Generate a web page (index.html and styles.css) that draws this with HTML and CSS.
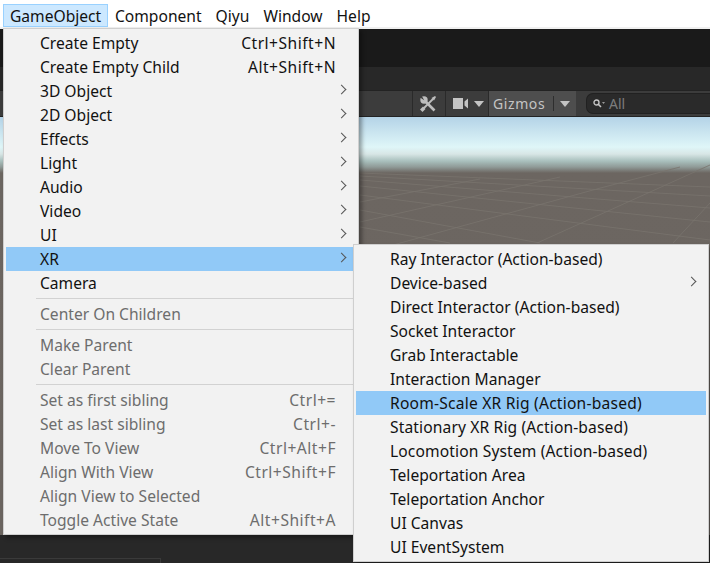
FILE: index.html
```html
<!DOCTYPE html>
<html>
<head>
  <title>GameObject menu</title>
  <link rel="stylesheet" href="styles.css">
</head>
<body>

<div class="menubar">
  <span class="top-item top-item-hover">GameObject</span>
  <span class="top-item">Component</span>
  <span class="top-item">Qiyu</span>
  <span class="top-item">Window</span>
  <span class="top-item">Help</span>
</div>

<div class="editor">
  <div class="band-title"></div>
  <div class="band-tabs"></div>
  <div class="band-tools">
    <div class="tool tool-wrench">
      <svg width="16" height="16" viewBox="0 0 16 16">
        <path d="M5 5 L14.500 14.500" stroke="#bdbdbd" stroke-width="2.600"/>
        <circle cx="4" cy="4" r="3.700" fill="#bdbdbd"/>
        <path d="M4.200 4.200 L0 1.500 L1.500 -0.500 Z" fill="#3c3c3c"/>
        <path d="M13 3 L3 13" stroke="#bdbdbd" stroke-width="1.800"/>
        <path d="M3 10.500 L5.500 13 L2.500 16 L0 13.500 Z" fill="#bdbdbd"/>
        <path d="M11.500 2 L15 0 L16 1 L14 4.500 Z" fill="#bdbdbd"/>
      </svg>
    </div>
    <div class="tool tool-camera">
      <svg width="16" height="11" viewBox="0 0 16 11"><rect width="10" height="11" fill="#c4c4c4"/><path d="M11.500 3.500 L15 0.500 L15 10.500 L11.500 7.500 Z" fill="#c4c4c4"/></svg>
      <span class="caret"></span>
    </div>
    <div class="tool tool-gizmos">
      <span class="gizmos-label">Gizmos</span>
      <span class="gizmos-sep"></span>
      <span class="caret"></span>
    </div>
    <div class="search">
      <svg width="12" height="10" viewBox="0 0 12 10"><circle cx="3.500" cy="3.500" r="2.500" fill="none" stroke="#c4c4c4" stroke-width="1.400"/><path d="M5.500 5.500 L8 8" stroke="#c4c4c4" stroke-width="1.600"/><path d="M9 3 L12 3 L10.500 5 Z" fill="#999"/></svg>
      <span class="search-text">All</span>
    </div>
  </div>
  <div class="scene">
    <svg class="grid" width="710" height="130" viewBox="0 0 710 130">
      <path d="M360 110 L450 126 M360 93 L540 126 M360 78 L710 123 M360 69 L710 105 M360 63 L710 91 M360 59 L710 79 M360 56 L710 70" stroke="#79736d" stroke-width="0.800" fill="none"/>
      <path d="M393 128 L593 73 L680 50 M537 126 L710 48 M673 126 L710 86 M360 105 L560 60 M360 85 L480 62" stroke="#79736d" stroke-width="0.800" fill="none"/>
    </svg>
  </div>
  <div class="band-bottom">
    <div class="bottom-cell"></div>
  </div>
</div>

<div class="menu menu-main">
  <div class="row"><span>Create Empty</span><span class="keys">Ctrl+Shift+N</span></div>
  <div class="row"><span>Create Empty Child</span><span class="keys">Alt+Shift+N</span></div>
  <div class="row has-sub"><span>3D Object</span></div>
  <div class="row has-sub"><span>2D Object</span></div>
  <div class="row has-sub"><span>Effects</span></div>
  <div class="row has-sub"><span>Light</span></div>
  <div class="row has-sub"><span>Audio</span></div>
  <div class="row has-sub"><span>Video</span></div>
  <div class="row has-sub"><span>UI</span></div>
  <div class="row has-sub row-on"><span>XR</span></div>
  <div class="row"><span>Camera</span></div>
  <div class="sep"></div>
  <div class="row off"><span>Center On Children</span></div>
  <div class="sep"></div>
  <div class="row off"><span>Make Parent</span></div>
  <div class="row off"><span>Clear Parent</span></div>
  <div class="sep"></div>
  <div class="row off"><span>Set as first sibling</span><span class="keys">Ctrl+=</span></div>
  <div class="row off"><span>Set as last sibling</span><span class="keys">Ctrl+-</span></div>
  <div class="row off"><span>Move To View</span><span class="keys">Ctrl+Alt+F</span></div>
  <div class="row off"><span>Align With View</span><span class="keys">Ctrl+Shift+F</span></div>
  <div class="row off"><span>Align View to Selected</span></div>
  <div class="row off"><span>Toggle Active State</span><span class="keys">Alt+Shift+A</span></div>
</div>

<div class="menu menu-sub">
  <div class="row"><span>Ray Interactor (Action-based)</span></div>
  <div class="row has-sub"><span>Device-based</span></div>
  <div class="row"><span>Direct Interactor (Action-based)</span></div>
  <div class="row"><span>Socket Interactor</span></div>
  <div class="row"><span>Grab Interactable</span></div>
  <div class="row"><span>Interaction Manager</span></div>
  <div class="row row-on wider"><span>Room-Scale XR Rig (Action-based)</span></div>
  <div class="row wide"><span>Stationary XR Rig (Action-based)</span></div>
  <div class="row wide"><span>Locomotion System (Action-based)</span></div>
  <div class="row"><span>Teleportation Area</span></div>
  <div class="row"><span>Teleportation Anchor</span></div>
  <div class="row"><span>UI Canvas</span></div>
  <div class="row"><span>UI EventSystem</span></div>
</div>

</body>
</html>
```

FILE: styles.css
```css
html, body {
  margin: 0;
  height: 563px;
  overflow: hidden;
}
body {
  position: relative;
  width: 710px;
  font-family: "Noto Sans", "Open Sans", sans-serif;
  font-size: 15.6px;
  color: #111;
  background: #282828;
}

.menubar {
  height: 29px;
  box-sizing: border-box;
  padding: 4px 0 0 3px;
  display: flex;
  background: #fff;
  border-bottom: 2px solid #f0f0f0;
}
.top-item {
  height: 23px;
  line-height: 23px;
  padding: 0 6px;
  border: 1px solid transparent;
  box-sizing: border-box;
}
.top-item-hover {
  width: 105px;
  background: #cce8ff;
  border-color: #99d1ff;
}

.editor {
  height: 534px;
  display: flex;
  flex-direction: column;
}
.band-title { height: 38px; background: #1a1a1a; }
.band-tabs { height: 23px; background: #282828; }
.band-tools {
  height: 27px;
  box-sizing: border-box;
  background: #3c3c3c;
  display: flex;
  align-items: stretch;
  padding-left: 412px;
  border-top: 1px solid #232323;
  border-bottom: 1px solid #232323;
}
.tool {
  display: flex;
  align-items: center;
  border-left: 1px solid #2a2a2a;
}
.tool-wrench { width: 33px; box-sizing: border-box; padding-left: 7px; }
.tool-camera { width: 43px; gap: 5px; padding-left: 7px; box-sizing: border-box; }
.tool-gizmos {
  width: 88px;
  box-sizing: border-box;
  padding-left: 4px;
  background: #4e4e4e;
  color: #c4c4c4;
  font-size: 14px;
  letter-spacing: 0.6px;
}
.gizmos-sep {
  width: 1px;
  height: 15px;
  margin: 0 6px 0 8px;
  background: #2e2e2e;
}
.caret {
  width: 0;
  height: 0;
  border-left: 5px solid transparent;
  border-right: 5px solid transparent;
  border-top: 6px solid #c4c4c4;
}
.search {
  flex: 1;
  margin: 2px 0 2px 10px;
  padding-left: 6px;
  background: #2a2a2a;
  border: 1px solid #212121;
  border-right: none;
  border-radius: 7px 0 0 7px;
  display: flex;
  align-items: center;
  gap: 4px;
  color: #7c7c7c;
  font-size: 14px;
}

.scene {
  position: relative;
  flex: 1;
  overflow: hidden;
  background: linear-gradient(to bottom, #b4d3e7 0, #dff6f8 30px, #d8e6e6 37px, #a9c0bd 44px, #8f9a97 50px, #6c6661 56px, #6b6560 100%);
}
.grid { position: absolute; left: 0; top: 0; }
.band-bottom {
  height: 28px;
  box-sizing: border-box;
  background: #282828;
  padding-top: 23px;
}
.bottom-cell {
  height: 5px;
  width: 160px;
  border-top: 1px solid #3a3a3a;
  border-right: 1px solid #3a3a3a;
}

.menu {
  position: absolute;
  box-sizing: border-box;
  padding: 2px;
  background: #f2f2f2;
  border: 1px solid #cfcfcf;
  box-shadow: 3px 3px 4px rgba(0, 0, 0, 0.35);
}
.menu-main { left: 3px; top: 28px; width: 356px; height: 507px; }
.menu-sub { left: 353px; top: 244px; width: 356px; height: 318px; }

.row {
  height: 24px;
  line-height: 25px;
  padding: 0 20px 0 34px;
  display: flex;
  justify-content: space-between;
  position: relative;
}
.row-on { background: #91c9f7; }
.off { color: #6d6d6d; }
.keys { letter-spacing: 0.5px; }
.wide { letter-spacing: 0.13px; }
.wider { letter-spacing: 0.22px; }
.has-sub::after {
  content: "";
  position: absolute;
  right: 11px;
  top: 7px;
  width: 6px;
  height: 6px;
  border-top: 1px solid #555;
  border-right: 1px solid #555;
  transform: rotate(45deg);
}
.sep {
  height: 1px;
  margin: 3px 0 3px 30px;
  background: #d2d2d2;
}
```
